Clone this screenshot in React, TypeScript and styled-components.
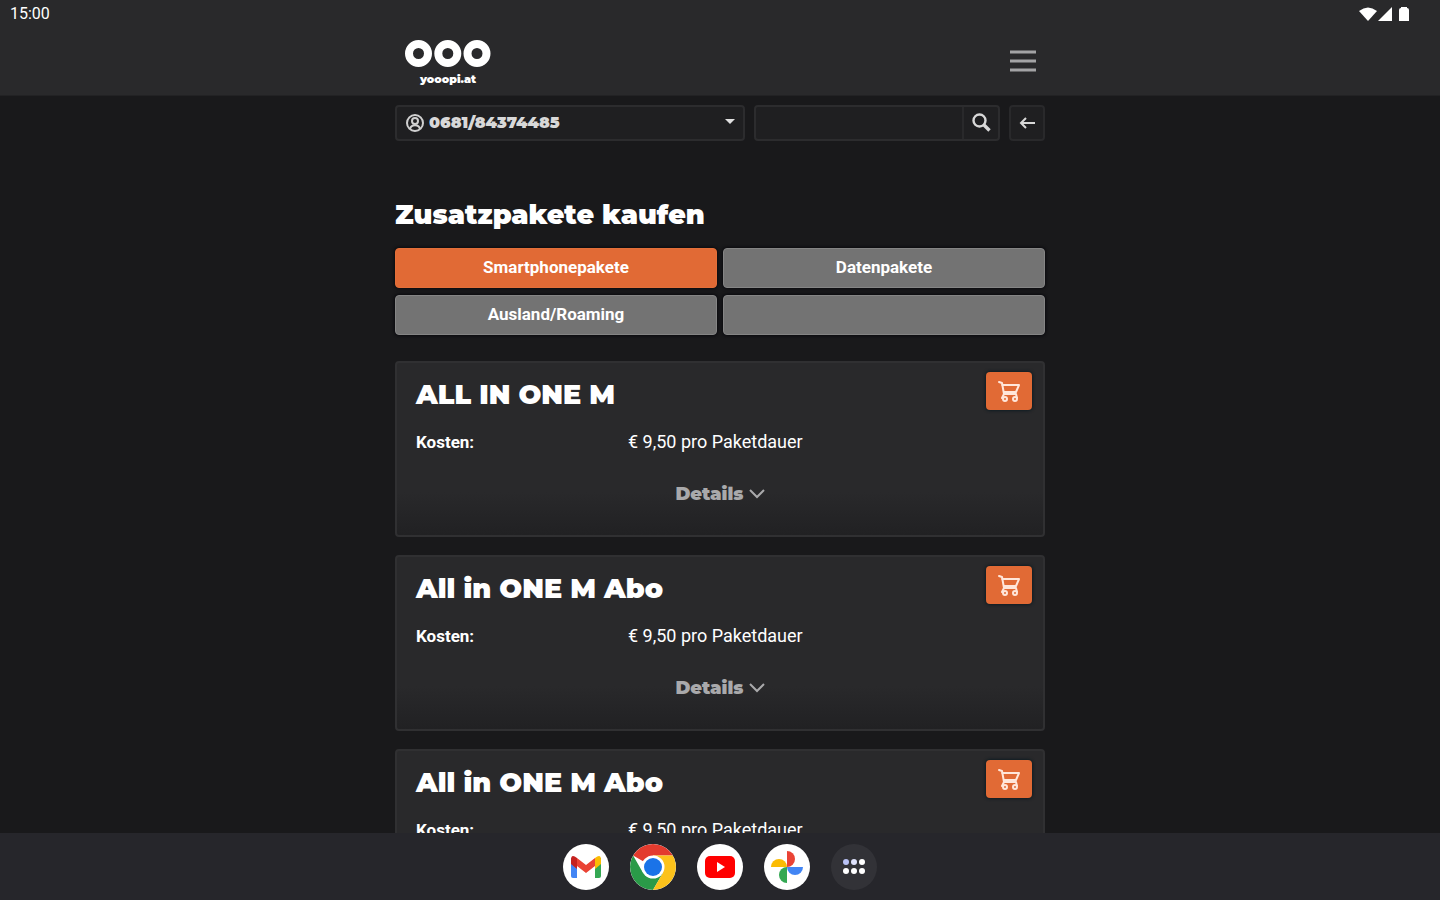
import React from "react";
import styled, { createGlobalStyle } from "styled-components";

const GlobalStyle = createGlobalStyle`
  * { box-sizing: border-box; }
  body { margin: 0; background: #19191b; }
  button, input, select { font: inherit; color: inherit; margin: 0; }
  h1, h2, dl, dd, ul { margin: 0; padding: 0; }
`;

const display = `Montserrat, Inter, sans-serif`;

const Screen = styled.div`
  display: flex;
  flex-direction: column;
  height: 100vh;
  overflow: hidden;
  background: #19191b;
  color: #fff;
  font: 400 18px/24px Roboto, sans-serif;
`;

const StatusBar = styled.div`
  display: flex;
  flex: none;
  align-items: center;
  justify-content: space-between;
  height: 28px;
  padding: 0 28px 0 10px;
  background: #29292b;
  font-size: 16px;
`;

const StatusIcons = styled.svg`
  display: block;
  width: 54px;
  height: 18px;
`;

const Header = styled.header`
  flex: none;
  height: 68px;
  background: #29292b;
  border-bottom: 1px solid #222224;
`;

const Column = styled.div`
  width: 100%;
  max-width: 650px;
  margin: 0 auto;
`;

const HeaderRow = styled(Column)`
  display: flex;
  justify-content: space-between;
  align-items: flex-start;
  padding: 11px 8px 0 10px;
`;

const Brand = styled.a`
  display: flex;
  flex-direction: column;
  align-items: center;
  color: #fff;
  text-decoration: none;
  font: 900 11px/16px ${display};
`;

const MenuButton = styled.button`
  display: flex;
  margin-top: 8px;
  padding: 0;
  border: 0;
  background: none;
  color: #a3a3a5;
`;

const Main = styled.main`
  flex: 1;
  min-height: 0;
  overflow-y: auto;
  scrollbar-width: none;
`;

const Toolbar = styled.div`
  display: grid;
  grid-template-columns: minmax(0, 350fr) minmax(0, 246fr) 36px;
  gap: 9px;
  padding-top: 9px;
`;

const Field = styled.div`
  display: flex;
  align-items: center;
  min-width: 0;
  height: 36px;
  border: 2px solid #2c2c2e;
  border-radius: 4px;
  background: #1f1f21;
`;

const PhoneField = styled(Field)`
  padding: 0 8px;
  gap: 5px;
`;

const PhoneSelect = styled.select`
  flex: 1;
  min-width: 0;
  padding: 0;
  border: 0;
  appearance: none;
  background: transparent;
  color: #d8d8d8;
  font: 900 16px/24px ${display};
`;

const SearchInput = styled.input`
  flex: 1;
  min-width: 0;
  height: 100%;
  padding: 0 10px;
  border: 0;
  background: transparent;
`;

const SearchButton = styled.button`
  display: flex;
  align-items: center;
  justify-content: center;
  width: 36px;
  height: 100%;
  padding: 0;
  border: 0;
  border-left: 2px solid #29292b;
  background: transparent;
  color: #d8d8d8;
`;

const BackButton = styled.button`
  display: flex;
  align-items: center;
  justify-content: center;
  width: 36px;
  height: 36px;
  padding: 0;
  border: 2px solid #29292b;
  border-radius: 4px;
  background: #1f1f21;
  color: #d8d8d8;
`;

const PageTitle = styled.h1`
  margin-top: 56px;
  font: 900 27px/36px ${display};
`;

const Tabs = styled.div`
  display: grid;
  grid-template-columns: 1fr 1fr;
  gap: 7px 6px;
  margin-top: 15px;
`;

const Tab = styled.button<{ $active?: boolean }>`
  height: 40px;
  padding: 0 12px 2px;
  border: 1px solid ${(p) => (p.$active ? "#e36f39" : "#858585")};
  border-radius: 4px;
  background: ${(p) => (p.$active ? "#e16a35" : "#737373")};
  box-shadow: 0 0 3px 1px #0b0b0f;
  color: #fff;
  font-size: 17px;
  font-weight: 700;
`;

const Packages = styled.div`
  display: flex;
  flex-direction: column;
  gap: 18px;
  padding: 26px 0 18px;
`;

const Card = styled.article`
  height: 176px;
  padding: 9px 11px 0 19px;
  border: 2px solid #303032;
  border-radius: 4px;
  background: linear-gradient(#29292b 75%, #212123);
`;

const CardHead = styled.div`
  display: flex;
  justify-content: space-between;
  align-items: flex-start;
`;

const CardTitle = styled.h2`
  padding-top: 5px;
  font: 900 27px/36px ${display};
`;

const CartButton = styled.button`
  display: flex;
  align-items: center;
  justify-content: center;
  width: 46px;
  height: 38px;
  padding: 0;
  border: 0;
  border-radius: 4px;
  background: #e16a35;
  box-shadow: 0 0 3px 1px #0f1c22;
  color: #ffe6da;
`;

const Costs = styled.dl`
  display: grid;
  grid-template-columns: 212px 1fr;
  margin-top: 17px;

  dt { font-size: 17px; font-weight: 700; }
`;

const DetailsButton = styled.button`
  display: flex;
  align-items: center;
  gap: 5px;
  margin: 28px auto 0;
  padding: 0 8px 0 0;
  border: 0;
  background: none;
  color: #a9a9ab;
  font: 900 18px/24px ${display};
`;

const Dock = styled.nav`
  display: flex;
  flex: none;
  justify-content: center;
  gap: 21px;
  height: 67px;
  padding-top: 11px;
  background: #26262b;
`;

const AppButton = styled.button<{ $dark?: boolean }>`
  display: flex;
  align-items: center;
  justify-content: center;
  width: 46px;
  height: 46px;
  padding: 0;
  border: 0;
  border-radius: 50%;
  overflow: hidden;
  background: ${(p) => (p.$dark ? "#323237" : "#fff")};
`;

const packages = ["ALL IN ONE M", "All in ONE M Abo", "All in ONE M Abo"];

const CartIcon = () => (
  <svg width="24" height="24" viewBox="0 0 24 24" fill="none" stroke="currentColor" strokeWidth="2" strokeLinejoin="round" strokeLinecap="round">
    <path d="M2 3l3 1 2 11h12M5 6h17l-3 7H7M7 15l-2 4M19 15l1 4" />
    <circle cx="8" cy="20" r="2" />
    <circle cx="18" cy="20" r="2" />
  </svg>
);

const PackageCard = ({ title }: { title: string }) => (
  <Card>
    <CardHead>
      <CardTitle>{title}</CardTitle>
      <CartButton aria-label={`${title} kaufen`}><CartIcon /></CartButton>
    </CardHead>
    <Costs>
      <dt>Kosten:</dt>
      <dd>€ 9,50 pro Paketdauer</dd>
    </Costs>
    <DetailsButton>
      Details
      <svg width="16" height="10" viewBox="0 0 16 10" fill="none" stroke="currentColor" strokeWidth="2">
        <path d="M1 1l7 7 7-7" />
      </svg>
    </DetailsButton>
  </Card>
);

export default function App() {
  return (
    <Screen>
      <GlobalStyle />
      <StatusBar>
        <span>15:00</span>
        <StatusIcons viewBox="0 0 54 18" fill="#fff" aria-hidden="true">
          <path d="M1 6Q10 -1 19 6L10 16Z" />
          <path d="M20 16L34 2V16Z" />
          <path d="M41 5q0-2 2-2V2h6v1q2 0 2 2v11H41Z" />
        </StatusIcons>
      </StatusBar>
      <Header>
        <HeaderRow>
          <Brand href="#">
            <svg width="86" height="32" viewBox="0 0 86 32" fill="none" stroke="#fff" strokeWidth="8" aria-hidden="true">
              <circle cx="13.5" cy="14.5" r="9.5" />
              <circle cx="42.8" cy="14.5" r="9.5" />
              <circle cx="72" cy="14.5" r="9.5" />
            </svg>
            yooopi.at
          </Brand>
          <MenuButton aria-label="Menü">
            <svg width="28" height="26" viewBox="0 0 28 26" fill="none" stroke="currentColor" strokeWidth="3">
              <path d="M1 5h26M1 14h26M1 23h26" />
            </svg>
          </MenuButton>
        </HeaderRow>
      </Header>
      <Main>
        <Column>
          <Toolbar>
            <PhoneField>
              <svg width="19" height="18" viewBox="0 0 19 18" fill="none" stroke="#d0d0d0" strokeWidth="2" aria-hidden="true">
                <circle cx="10" cy="9" r="8" />
                <circle cx="10" cy="7" r="3" />
                <path d="M5 15c1-5 9-5 10 0" />
              </svg>
              <PhoneSelect aria-label="Rufnummer">
                <option>0681/84374485</option>
              </PhoneSelect>
              <svg width="10" height="8" viewBox="0 0 10 8" fill="#e0e0e0" aria-hidden="true">
                <path d="M0 0h10L5 5Z" />
              </svg>
            </PhoneField>
            <Field>
              <SearchInput type="search" aria-label="Suche" />
              <SearchButton aria-label="Suchen">
                <svg width="20" height="20" viewBox="0 0 20 20" fill="none" stroke="currentColor" strokeWidth="2.4">
                  <circle cx="8.5" cy="7.5" r="6" />
                  <path d="M12.5 11.5l6 6" strokeWidth="3.4" />
                </svg>
              </SearchButton>
            </Field>
            <BackButton aria-label="Zurück">
              <svg width="16" height="12" viewBox="0 0 16 12" fill="none" stroke="currentColor" strokeWidth="2">
                <path d="M16 6H2M7 1L2 6l5 5" />
              </svg>
            </BackButton>
          </Toolbar>
          <PageTitle>Zusatzpakete kaufen</PageTitle>
          <Tabs>
            <Tab $active>Smartphonepakete</Tab>
            <Tab>Datenpakete</Tab>
            <Tab>Ausland/Roaming</Tab>
            <Tab aria-label="Weitere Pakete" />
          </Tabs>
          <Packages>
            {packages.map((title, i) => <PackageCard key={i} title={title} />)}
          </Packages>
        </Column>
      </Main>
      <Dock aria-label="Apps">
        <AppButton aria-label="Gmail">
          <svg width="30" height="24" viewBox="0 0 30 24">
            <path d="M0 3h6v20H2q-2 0-2-2Z" fill="#4285f4" />
            <path d="M24 3h6v18q0 2-2 2h-4Z" fill="#34a853" />
            <path d="M6 3l9 7 9-7v8l-9 7-9-7Z" fill="#ea4335" />
            <path d="M24 3q6-5 6 2v4l-6 5Z" fill="#fbbc04" />
            <path d="M0 5q0-7 6-2v11L0 9Z" fill="#c5221f" />
          </svg>
        </AppButton>
        <AppButton aria-label="Chrome">
          <svg width="46" height="46" viewBox="0 0 46 46">
            <path d="M23 23L3.1 11.5A23 23 0 0 1 42.9 11.5H23Z" fill="#e33b2e" />
            <path d="M3.1 11.5A23 23 0 0 0 23 46L33 28.7 23 23 13 28.7Z" fill="#2a9a48" />
            <path d="M42.9 11.5A23 23 0 0 1 23 46L33 28.7 23 11.5Z" fill="#fcc21b" />
            <circle cx="23" cy="23" r="11.5" fill="#fff" />
            <circle cx="23" cy="23" r="9" fill="#1a73e8" />
          </svg>
        </AppButton>
        <AppButton aria-label="YouTube">
          <svg width="32" height="24" viewBox="0 0 32 24">
            <rect x="1" y="1" width="30" height="22" rx="5" fill="#f00" />
            <path d="M13 7l8 5-8 5Z" fill="#fff" />
          </svg>
        </AppButton>
        <AppButton aria-label="Google Fotos">
          <svg width="34" height="34" viewBox="0 0 34 34">
            <path d="M17 1a8 8 0 0 1 0 16Z" fill="#ea4335" />
            <path d="M33 17a8 8 0 0 1-16 0Z" fill="#4285f4" />
            <path d="M17 33a8 8 0 0 1 0-16Z" fill="#34a853" />
            <path d="M1 17a8 8 0 0 1 16 0Z" fill="#fbbc04" />
          </svg>
        </AppButton>
        <AppButton $dark aria-label="Alle Apps">
          <svg width="24" height="18" viewBox="0 0 24 18" fill="#fff">
            <circle cx="4" cy="4" r="3" fill="#b9c2f5" />
            <circle cx="12" cy="4" r="3" fill="#dfe2fb" />
            <circle cx="20" cy="4" r="3" />
            <circle cx="4" cy="13" r="3" />
            <circle cx="12" cy="13" r="3" />
            <circle cx="20" cy="13" r="3" />
          </svg>
        </AppButton>
      </Dock>
    </Screen>
  );
}
